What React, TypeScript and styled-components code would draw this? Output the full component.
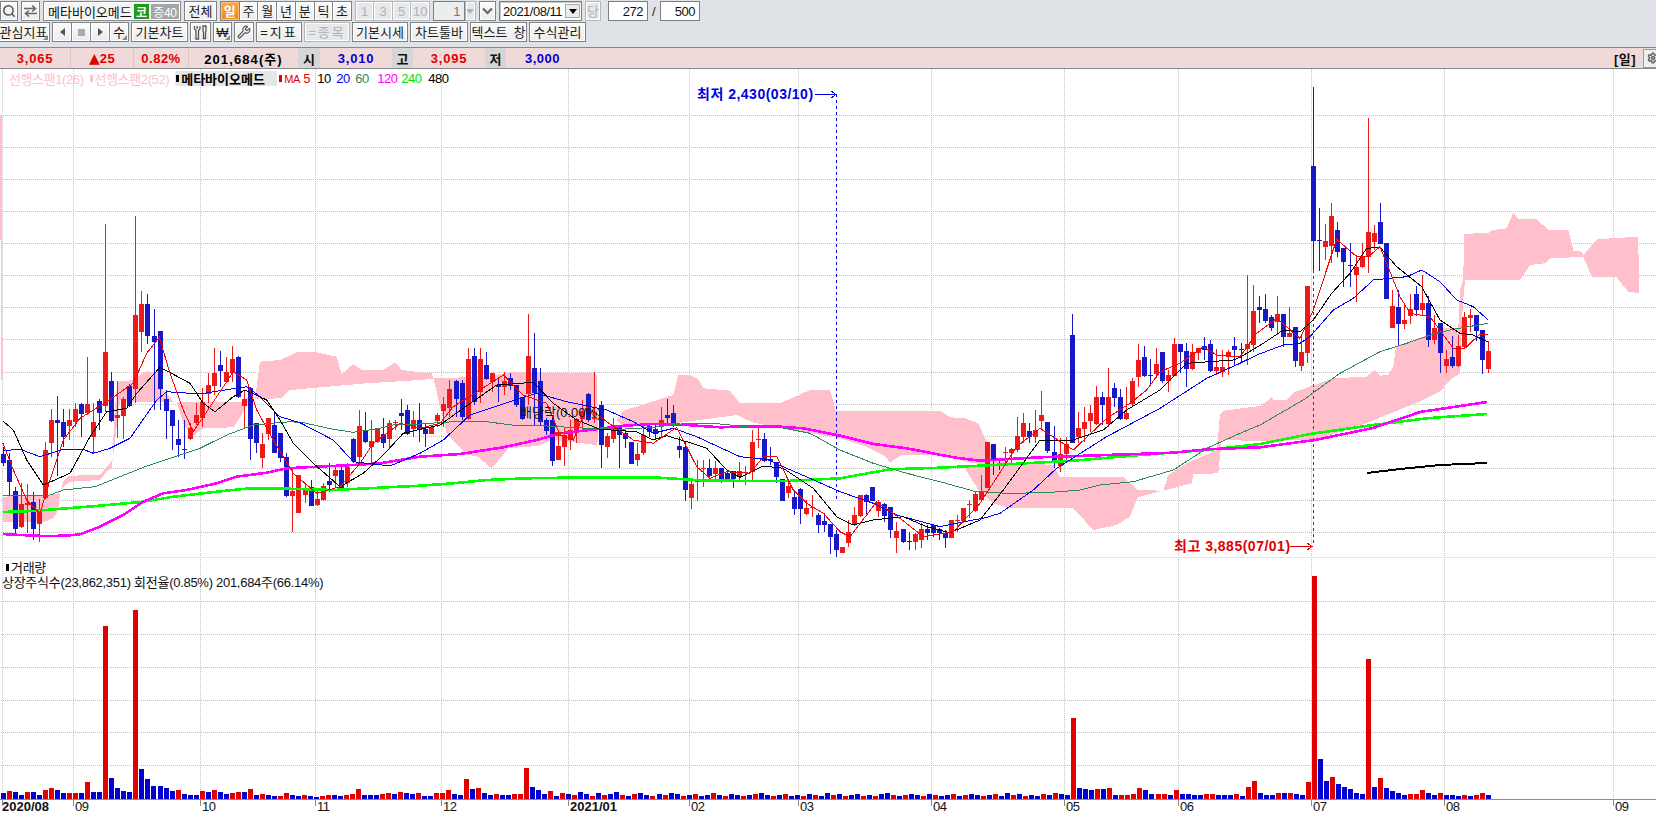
import React from 'react';
import styled, { createGlobalStyle } from 'styled-components';
import { Search, Wrench, Settings } from 'lucide-react';

const FONT = `"Liberation Sans","Noto Sans CJK KR",sans-serif`;
const CHART_TOP = 69;

const GlobalStyle = createGlobalStyle`
  html, body { margin: 0; padding: 0; background: #fff; overflow: hidden; }
  #root { width: 1656px; height: 817px; }
  * { box-sizing: border-box; }
`;

/* ---------- chart data, read off the picture in 3x crop coordinates ---------- */
type Pt = [number, number];
const seg = (ox: number, oy: number, f: number[]): Pt[] => {
  const out: Pt[] = [];
  for (let i = 0; i < f.length; i += 2) out.push([ox + f[i] / 3, oy + f[i + 1] / 3]);
  return out;
};
const abs = (f: number[]): Pt[] => {
  const out: Pt[] = [];
  for (let i = 0; i < f.length; i += 2) out.push([f[i], f[i + 1]]);
  return out;
};
const Z4 = (f: number[]) => seg(0, 340, f);
const Z5 = (f: number[]) => seg(420, 340, f);
const Z6 = (f: number[]) => seg(840, 340, f);
const Z7 = (f: number[]) => seg(1240, 80, f);
const str = (p: Pt[]) => p.map(([x, y]) => `${x.toFixed(1)},${y.toFixed(1)}`).join(' ');

const clouds: Pt[][] = [
  abs([0, 115, 2, 115, 2, 337, 3, 337, 3, 380, 1, 380, 1, 240, 0, 240]),
  Z4([8, 470, 135, 465, 180, 460, 190, 425, 208, 407, 300, 405, 320, 380, 338, 360, 342, 240, 352, 125, 400, 120, 440, 93, 475, 100, 490, 150, 520, 185, 405, 187, 360, 180, 350, 260, 335, 385, 320, 395, 300, 420, 210, 425, 190, 440, 180, 460, 175, 510, 160, 535, 135, 545, 10, 545]),
  Z4([530, 185, 730, 185, 760, 150, 755, 165, 725, 225, 700, 262, 610, 265, 575, 290, 550, 250]),
  Z4([765, 177, 780, 65, 840, 60, 890, 37, 945, 36, 1010, 50, 1025, 103, 1060, 72, 1085, 90, 1150, 90, 1185, 67, 1205, 90, 1260, 97, 1295, 100, 1300, 116, 1260, 120, 1100, 130, 1065, 133, 870, 150, 845, 175]),
  Z5([40, 115, 135, 112, 190, 110, 280, 97, 525, 100, 530, 105, 535, 300, 530, 315, 400, 300, 350, 318, 265, 325, 245, 350, 215, 385, 170, 348, 140, 345, 80, 280]),
  [
    ...Z5([590, 240, 610, 212, 680, 190, 760, 165, 775, 105, 810, 105, 835, 118, 850, 145, 930, 152, 960, 190, 1080, 190, 1170, 150, 1230, 150, 1248, 212]),
    ...Z6([0, 212, 300, 212, 330, 232, 375, 235, 415, 250, 440, 305, 460, 320, 470, 365, 440, 372, 400, 370, 360, 360, 300, 345, 185, 345, 150, 368, 135, 348, 80, 320, 0, 295]),
    ...Z5([1000, 248, 950, 225, 765, 250, 650, 255, 610, 260]),
  ],
  [
    ...Z6([375, 385, 440, 372, 470, 365, 640, 375, 660, 410, 850, 410, 893, 450, 970, 452, 985, 405, 1040, 370, 1075, 355, 1130, 330, 1140, 225, 1150, 212, 1260, 198]),
    ...Z7([85, 960, 95, 950, 100, 960, 140, 960, 165, 935, 190, 927, 280, 895, 380, 890, 405, 870, 420, 887, 445, 885, 460, 860, 468, 800, 550, 770, 600, 745, 655, 745, 660, 630, 670, 600, 672, 462, 745, 458, 760, 450, 800, 445, 820, 397, 835, 418, 890, 417, 925, 450, 985, 450, 1000, 512, 1025, 515, 1030, 525, 1070, 478, 1195, 470, 1197, 640, 1165, 635, 1130, 592, 1055, 590, 1030, 530, 1000, 532, 930, 535, 915, 550, 870, 555, 840, 600, 675, 600, 668, 680, 660, 880, 630, 900, 600, 935, 550, 960]),
    ...abs([1362, 425, 1315, 440, 1260, 441]),
    ...Z6([1145, 300, 1135, 400, 1060, 403, 1055, 430, 970, 452, 945, 458, 893, 472, 870, 530, 830, 555, 760, 570, 700, 505, 510, 505, 460, 490, 415, 450]),
  ],
];

const lines: { c: string; w: number; p: Pt[] }[] = [
  { c: '#000', w: 2, p: abs([1367, 473, 1400, 469, 1440, 465, 1487, 463]) },
  {
    c: '#00ff00', w: 2.6, p: [
      ...Z4([8, 516, 100, 513, 200, 505, 300, 497, 430, 485, 520, 470, 650, 455, 750, 445, 860, 446, 1000, 450, 1100, 445, 1260, 437]),
      ...Z5([100, 430, 200, 420, 320, 415, 500, 412, 700, 412, 860, 422, 1100, 423, 1260, 415]),
      ...Z6([150, 388, 300, 383, 500, 373, 700, 362, 900, 345, 1100, 330, 1260, 312]),
      ...abs([1310, 434, 1373, 425, 1430, 418, 1487, 414]),
    ],
  },
  {
    c: '#ff00ff', w: 2.6, p: [
      ...Z4([8, 582, 60, 585, 130, 588, 200, 587, 240, 583, 300, 560, 370, 525, 430, 485, 490, 460, 560, 450, 650, 430, 710, 410, 800, 398, 860, 385, 950, 380, 1060, 375, 1140, 370, 1260, 350]),
      ...Z5([120, 342, 250, 322, 350, 300, 420, 280, 530, 268, 600, 258, 700, 252, 800, 255, 900, 262, 1050, 258, 1150, 265, 1260, 287]),
      ...Z6([100, 312, 200, 325, 340, 352, 420, 362, 600, 352, 800, 345, 1000, 338, 1100, 328, 1260, 322]),
      ...abs([1315, 440, 1373, 428, 1420, 412, 1487, 402]),
    ],
  },
  {
    c: '#2e8b57', w: 1, p: [
      ...Z4([10, 467, 150, 465, 190, 450, 285, 440, 360, 410, 440, 378, 530, 348, 600, 325, 680, 285, 760, 255, 870, 245, 910, 248, 1000, 268, 1060, 277, 1140, 265, 1190, 252, 1260, 252]),
      ...Z5([100, 245, 200, 245, 290, 257, 380, 258, 500, 265, 600, 268, 700, 262, 800, 250, 880, 250, 1000, 262, 1080, 262, 1170, 280, 1260, 330]),
      ...Z6([100, 370, 200, 400, 300, 425, 400, 453, 500, 460, 620, 458, 720, 450, 780, 435, 880, 425, 1000, 390, 1100, 325, 1200, 280, 1260, 255]),
      ...Z7([190, 960, 300, 880, 420, 815, 500, 790, 580, 762, 640, 748, 745, 730]),
    ],
  },
  {
    c: '#0000ff', w: 1, p: [
      ...Z4([8, 332, 60, 328, 120, 350, 190, 328, 250, 328, 280, 340, 330, 325, 390, 295, 470, 180, 500, 155, 600, 162, 660, 152, 740, 140, 780, 170, 840, 230, 900, 248, 1000, 300, 1060, 365, 1170, 378, 1260, 340]),
      ...Z5([70, 300, 150, 225, 300, 175, 350, 160, 440, 185, 560, 210, 640, 245, 700, 280, 760, 265, 830, 290, 960, 350, 1040, 358, 1100, 385, 1170, 415, 1260, 455]),
      ...Z6([100, 490, 170, 525, 300, 560, 400, 540, 430, 535, 480, 520, 580, 450, 650, 385, 800, 290, 960, 205, 1100, 115]),
      ...Z7([0, 850, 50, 825, 130, 795, 180, 790, 210, 770, 280, 690, 340, 655, 400, 600, 500, 590, 545, 570, 600, 605, 650, 660, 700, 680, 745, 720]),
    ],
  },
  {
    c: '#000', w: 1, p: [
      ...Z4([8, 242, 40, 270, 80, 360, 130, 435, 210, 400, 270, 290, 320, 215, 380, 205, 410, 160, 480, 82, 520, 103, 570, 130, 610, 190, 645, 215, 700, 170, 735, 150, 800, 180, 840, 240, 880, 310, 940, 370, 1020, 440, 1090, 400, 1150, 345, 1210, 280, 1260, 268]),
      ...Z5([60, 255, 130, 205, 230, 135, 340, 127, 400, 190, 470, 240, 540, 268, 650, 275, 700, 300, 740, 287, 800, 305, 860, 325, 920, 390, 960, 412, 1030, 378, 1090, 385, 1180, 445, 1250, 530]),
      ...Z6([40, 555, 100, 540, 190, 530, 260, 560, 330, 578, 420, 540, 490, 450, 600, 300, 700, 300, 790, 270, 860, 210, 960, 150, 1040, 70, 1180, 60]),
      ...Z7([0, 832, 70, 790, 130, 750, 180, 755, 220, 720, 275, 640, 330, 580, 380, 505, 420, 502, 470, 560, 545, 620, 600, 720, 660, 760, 700, 765, 745, 787]),
    ],
  },
  {
    c: '#ff0000', w: 1, p: [
      ...Z4([8, 308, 40, 390, 80, 480, 120, 520, 150, 420, 190, 300, 240, 235, 320, 185, 400, 130, 440, 40, 478, -8, 510, 100, 550, 210, 580, 275, 650, 170, 700, 95, 740, 120, 770, 210, 820, 300, 880, 400, 950, 460, 1020, 440, 1080, 370, 1120, 310, 1200, 250, 1260, 265]),
      ...Z5([60, 250, 100, 200, 180, 150, 250, 105, 310, 165, 380, 190, 420, 285, 460, 300, 500, 200, 560, 245, 640, 300, 700, 310, 770, 262, 830, 380, 870, 415, 920, 395, 990, 400, 1030, 350, 1070, 350, 1120, 450, 1160, 490, 1210, 520, 1260, 575]),
      ...Z6([30, 590, 110, 485, 180, 535, 250, 590, 340, 575, 420, 490, 530, 320, 600, 265, 700, 330, 800, 235, 870, 190, 920, 150, 960, 95, 1020, 70, 1090, 20, 1130, 45, 1180, 50]),
      ...Z7([0, 830, 50, 760, 110, 715, 180, 775, 220, 690, 290, 478, 350, 530, 385, 530, 420, 500, 480, 650, 510, 700, 570, 710, 640, 805, 675, 805, 720, 762, 745, 765]),
    ],
  },
];

/* x, colour (1 red, 0 blue), high, body top, body bottom, low */
type C = [number, number, number, number, number, number];
const c4: C[] = [
  [10,0,322,342,370,378],[28,0,340,360,427,465],[46,0,440,453,568,580],[64,1,430,492,560,565],[82,1,432,490,494,578],[100,0,455,486,567,600],[118,1,478,515,552,606],[136,1,305,330,473,478],[154,1,207,240,308,350],[172,0,168,240,248,408],
  [190,0,207,246,290,320],[208,1,207,240,258,300],[226,1,190,207,245,260],[244,0,190,192,222,290],[262,1,50,192,218,225],[280,1,190,246,290,340],[298,0,178,183,218,270],[316,1,-348,36,198,215],[334,0,95,123,242,245],[352,1,122,225,233,295],
  [370,1,170,176,228,297],[388,0,133,137,198,200],[406,1,-372,-75,147,190],[424,1,-147,-108,-24,36],[442,0,-138,-108,-12,12],[463,0,-93,-12,6,210],[481,0,-27,-27,147,210],[499,0,150,178,212,298],[517,0,210,210,258,330],[535,0,240,297,315,352],
  [553,0,240,327,330,358],[571,1,250,265,298,300],[589,1,190,225,250,255],[607,1,145,185,235,262],[625,1,100,135,162,190],[643,1,24,98,138,165],[661,0,33,75,93,140],[679,1,51,97,127,130],[697,1,18,57,98,125],[715,0,48,50,172,175],
  [733,1,150,177,198,265],[751,0,140,145,298,360],[769,0,250,250,308,340],[787,1,278,312,353,385],[805,1,235,235,282,300],[823,0,215,255,338,340],[841,0,280,280,355,365],[859,0,340,352,468,470],[877,1,385,453,468,575],[895,1,405,405,518,520],
  [916,1,430,450,465,490],[934,0,420,442,497,498],[952,1,450,478,495,497],[970,1,430,438,480,482],[988,0,370,424,434,455],[1006,1,378,390,408,445],[1024,0,375,390,443,445],[1042,1,370,380,428,440],[1060,0,293,297,362,370],[1078,1,210,258,352,370],
  [1096,0,215,270,306,310],[1114,1,240,304,320,368],[1132,1,265,268,307,310],[1150,0,235,282,310,325],[1168,1,240,250,298,328],[1186,1,240,245,248,270],[1204,0,178,219,228,270],[1222,0,195,210,282,285],[1240,1,212,240,268,290],[1258,0,190,240,270,305],
];
const c5: C[] = [
  [16,0,250,268,282,320],[34,1,255,260,281,283],[52,1,220,225,243,260],[70,1,170,192,213,262],[88,1,120,147,204,230],[109,0,120,123,178,232],[127,0,120,128,232,240],[145,1,25,57,237,240],[163,0,25,48,186,195],[181,1,25,57,156,190],
  [199,0,37,75,118,120],[217,1,99,99,126,155],[235,0,115,135,141,185],[253,1,97,124,140,165],[271,0,99,114,138,150],[289,0,135,135,194,200],[307,0,172,172,237,240],[325,1,-78,48,163,195],[343,0,-21,84,160,255],[361,0,85,123,245,258],
  [379,0,235,240,272,285],[397,0,235,240,362,378],[415,1,275,318,360,360],[433,1,265,284,321,378],[451,1,240,270,300,330],[469,1,235,238,273,310],[487,1,180,212,236,270],[505,0,160,163,240,245],[523,1,97,232,236,250],[544,0,183,195,315,385],
  [562,1,280,288,320,355],[580,1,235,262,297,310],[598,0,260,262,285,385],[616,0,270,280,296,325],[634,0,305,305,372,372],[652,1,308,342,360,378],[670,1,250,285,340,345],[688,0,250,257,277,290],[706,0,250,266,282,300],[724,1,200,240,262,295],
  [742,0,177,225,233,255],[760,0,195,218,250,260],[778,0,290,318,330,355],[796,0,305,320,450,483],[814,1,415,432,473,507],[832,1,360,424,427,483],[850,1,360,384,387,440],[868,0,358,384,408,420],[886,1,362,384,402,420],[904,0,384,384,420,430],
  [922,0,390,400,416,420],[940,0,393,393,417,443],[958,1,365,393,408,420],[976,1,378,396,398,435],[997,1,270,305,396,420],[1015,1,262,297,299,325],[1033,0,280,297,362,365],[1051,0,322,357,362,375],[1069,0,365,365,410,430],[1087,0,418,418,482,484],
  [1105,1,420,438,460,473],[1123,0,455,470,507,525],[1141,0,445,447,507,552],[1159,1,480,504,521,525],[1177,1,465,502,505,530],[1195,0,520,525,554,578],[1213,0,520,543,554,575],[1231,0,552,552,590,642],[1249,0,570,583,630,650],
];
const c6: C[] = [
  [7,1,620,620,638,640],[25,1,540,576,608,620],[43,1,500,525,555,558],[61,1,465,465,527,530],[79,0,462,465,486,525],[97,0,440,441,482,483],[115,1,480,486,512,530],[133,0,488,492,528,545],[151,0,500,501,570,595],[169,1,545,573,594,640],
  [190,0,566,566,606,608],[208,0,575,603,605,630],[226,1,580,582,605,630],[244,1,548,567,600,625],[262,0,555,567,580,600],[280,0,555,555,579,590],[298,0,565,567,580,600],[316,0,570,580,594,625],[334,1,540,540,594,595],[352,1,525,540,542,575],
  [370,1,504,504,544,550],[388,1,480,492,495,535],[406,1,455,462,513,515],[424,1,405,456,480,485],[442,1,305,306,444,445],[460,0,312,312,360,405],[478,0,355,358,360,390],[496,1,320,335,338,370],[514,1,325,327,340,368],[532,1,230,289,330,335],
  [550,1,220,250,290,310],[568,0,250,272,290,310],[586,1,210,270,290,310],[604,1,153,225,243,270],[622,0,246,246,332,340],[643,0,258,336,362,385],[661,1,295,342,378,396],[679,1,290,312,343,370],[697,0,-78,-15,308,310],[715,1,215,265,290,310],
  [733,1,200,247,267,305],[751,1,195,220,243,275],[769,1,138,171,252,255],[787,0,155,171,195,255],[805,1,85,171,252,262],[823,0,130,144,174,200],[841,0,147,171,238,240],[859,1,140,219,238,240],[877,1,114,124,193,200],[895,1,12,60,110,140],
  [913,0,18,51,108,110],[931,0,57,105,107,137],[949,1,24,72,103,115],[967,0,36,36,123,130],[985,1,90,105,122,155],[1003,1,-6,12,108,108],[1021,0,12,12,36,100],[1039,0,9,33,87,140],[1057,1,12,36,87,90],[1075,1,24,24,40,60],
  [1093,0,-10,18,30,60],[1111,0,0,12,93,97],[1129,1,27,81,93,105],[1147,1,30,81,97,110],[1165,1,30,36,51,105],[1183,0,-10,18,30,78],
];
const c7: C[] = [
  [4,0,790,806,808,850],[22,1,585,792,808,855],[40,1,615,693,795,815],[58,0,648,681,690,730],[76,0,642,687,722,730],[94,0,705,711,743,752],[112,1,648,702,727,765],[130,0,702,702,770,800],[148,1,682,759,770,772],[166,0,741,741,842,862],
  [184,1,765,816,857,872],[202,1,618,618,818,848],[220,0,21,258,482,570],[238,0,384,481,483,572],[256,1,432,483,500,540],[274,1,370,408,497,548],[292,0,426,450,516,530],[310,0,504,504,546,620],[331,0,490,554,556,620],[349,1,525,561,584,665],
  [367,1,490,528,561,564],[385,1,114,456,531,578],[403,1,435,459,486,510],[421,0,369,426,492,492],[439,0,489,489,657,657],[457,1,630,678,744,744],[475,0,630,681,732,795],[493,1,672,720,732,747],[511,1,642,687,708,732],[529,0,618,642,690,708],
  [547,1,585,669,690,705],[565,0,648,669,780,801],[583,1,705,744,780,792],[601,0,729,729,819,879],[619,1,810,837,858,879],[637,0,768,831,858,864],[655,1,765,798,858,860],[673,1,697,711,802,805],[691,1,687,705,714,756],[709,0,705,705,753,783],
  [727,0,750,750,840,882],[745,1,783,813,866,879],
];
const candles = [
  ...c4.map((c) => ({ c, ox: 0, oy: 340 })),
  ...c5.map((c) => ({ c, ox: 420, oy: 340 })),
  ...c6.map((c) => ({ c, ox: 840, oy: 340 })),
  ...c7.map((c) => ({ c, ox: 1240, oy: 80 })),
];

/* volume: colour, top in crop coordinates (baseline 717) */
const volLeft = 'b699 r693 b696 b705 r696 b696 b705 r690 r684 b690 b699 r699 r699 b699 r666 b696 b696 r198 b654 b684 b693 b696 r150 b627 b657 b678 b678 b684 b693 r690 b702 b705 b705 r693 b696 r690 b696 b702 r699 r696 b696 r687 b705 r702 b705 b708 r708 r699 b705 b708 r705 b708 b711 r708 r705 b705 b708 r705 r702 r687 b705 b705 b705 r702 r699 b702 r696 b699 b702 r699 b708 b708 r699 r699 r690 b702 b705 r657 b687 r684 b699 b705 r702 b705 b705 r702 r702 r624 b681 b690 b702 r693 b708';
const volMidHeights = [6, 5, 4, 7, 5, 3, 6, 4, 5, 7, 4, 3, 5, 6, 4, 3, 5, 4, 6, 5, 3, 4, 5, 3, 4, 6, 4, 3, 5, 4, 3, 4, 5, 6, 4, 3, 4, 5, 3, 4, 3, 5, 4, 3, 6, 4, 5, 3, 4, 5, 3, 4, 3, 5, 6, 4, 3, 4, 5, 4, 3, 5, 4, 3, 4, 5, 3, 4, 5, 4, 3, 4, 5, 3, 6, 4, 5, 3, 4, 3, 5, 4, 6, 5, 4, 81, 11, 10, 9];
const volRight = 'r687 b687 r684 b705 r705 r705 r702 r684 b690 b702 r702 r702 b705 r690 b702 b702 b705 b705 r702 r702 b705 b705 b705 r702 b708 r681 r663 b699 b705 b705 r699 b699 r699 b702 b705 r666 r48 b597 b663 r651 b672 b681 b687 b699 b702 r297 b681 r654 b684 b693 b699 b705 r702 r702 r690 b699 b705 r699 b705 b705 b708 r705 b708 r705 r699 b705';
const parseVol = (s: string) => s.split(' ').map((t) => ({ red: t[0] === 'r', h: (717 - Number(t.slice(1))) / 3 }));
const volumes = [
  ...parseVol(volLeft),
  ...volMidHeights.map((h, i) => ({ red: i === 85 || (i < 85 && (i * 13) % 5 < 2), h })),
  ...parseVol(volRight),
];

const HGRID = [115, 147, 179, 211, 243, 275, 307, 339, 372, 404, 436, 468, 500, 532, 601, 634, 667, 700, 732, 765];
const VGRID = [2, 73, 200, 315, 441, 568, 689, 798, 931, 1064, 1178, 1311, 1444, 1613];
const AXIS: { x: number; t: string; strong?: boolean }[] = [
  { x: 2, t: '2020/08', strong: true }, { x: 75, t: '09' }, { x: 202, t: '10' }, { x: 317, t: '11' }, { x: 443, t: '12' },
  { x: 570, t: '2021/01', strong: true }, { x: 691, t: '02' }, { x: 800, t: '03' }, { x: 933, t: '04' }, { x: 1066, t: '05' },
  { x: 1180, t: '06' }, { x: 1313, t: '07' }, { x: 1446, t: '08' }, { x: 1615, t: '09' },
];

/* ---------- toolbar ---------- */
const Page = styled.div`
  width: 1656px;
  height: 817px;
  display: flex;
  flex-direction: column;
  overflow: hidden;
  font-family: ${FONT};
  background: #fff;
`;
const Toolbar = styled.div`
  height: 47px;
  padding-top: 1px;
  background: #dfe2e6;
  display: flex;
  flex-direction: column;
  gap: 1px;
`;
const ToolRow = styled.div<{ $gap: number; $left?: number }>`
  height: 20px;
  display: flex;
  gap: ${(p) => p.$gap}px;
  margin-left: ${(p) => p.$left ?? 0}px;
`;
const Btn = styled.div<{ $w: number; $on?: boolean; $off?: boolean; $corner?: boolean; $ml?: number; $ls?: number }>`
  position: relative;
  flex: none;
  width: ${(p) => p.$w}px;
  height: 20px;
  margin-left: ${(p) => p.$ml ?? 0}px;
  display: flex;
  align-items: center;
  justify-content: center;
  font-size: 13px;
  line-height: 1;
  white-space: nowrap;
  word-spacing: 2.5px;
  letter-spacing: ${(p) => p.$ls ?? 0}px;
  color: ${(p) => (p.$on ? '#fff' : p.$off ? '#b0b2b4' : '#1c1c1c')};
  font-weight: ${(p) => (p.$on ? 700 : 400)};
  background: ${(p) => (p.$on ? 'linear-gradient(#ffa544,#f08a1c)' : p.$off ? '#e6e8ea' : 'linear-gradient(#fbfbfb,#ececec)')};
  border: 1px solid ${(p) => (p.$off ? '#b4b7ba' : '#7f8386')};
  box-shadow: inset 0 0 0 1px ${(p) => (p.$on ? '#ffc27e' : '#fff')};
  &::after {
    content: '';
    display: ${(p) => (p.$corner ? 'block' : 'none')};
    position: absolute;
    right: 1px;
    bottom: 1px;
    border-style: solid;
    border-width: 0 0 5px 5px;
    border-color: transparent transparent #8a8a8a transparent;
  }
`;
const BtnGroup = styled.div`
  display: flex;
  flex: none;
  & > * + * {
    margin-left: -1px;
  }
`;
const NameField = styled.div`
  flex: none;
  width: 138px;
  height: 20px;
  display: flex;
  align-items: center;
  padding-left: 4px;
  font-size: 13px;
  color: #111;
  background: #f4f4f4;
  border: 1px solid #85898c;
  box-shadow: inset 0 0 0 1px #fff;
`;
const NameText = styled.span`
  width: 86px;
  white-space: nowrap;
`;
const Market = styled.span`
  width: 15px;
  height: 15px;
  display: flex;
  align-items: center;
  justify-content: center;
  background: #1f9a1f;
  color: #fff;
  font-size: 12px;
  font-weight: 700;
`;
const Grade = styled.span`
  width: 28px;
  height: 15px;
  margin-left: 2px;
  display: flex;
  align-items: center;
  justify-content: center;
  background: #a4a6a8;
  color: #fff;
  font-size: 12px;
  letter-spacing: -0.3px;
`;
const Field = styled.div<{ $w: number; $off?: boolean; $sunken?: boolean; $ml?: number }>`
  flex: none;
  width: ${(p) => p.$w}px;
  height: 20px;
  margin-left: ${(p) => p.$ml ?? 0}px;
  display: flex;
  align-items: center;
  justify-content: ${(p) => (p.$sunken ? 'flex-start' : 'flex-end')};
  padding: ${(p) => (p.$sunken ? '0 0 0 3px' : '0 4px 0 0')};
  font-size: 13px;
  letter-spacing: -0.5px;
  color: ${(p) => (p.$off ? '#777' : '#111')};
  background: ${(p) => (p.$off ? '#eceded' : '#fff')};
  border: 1px solid #7c8084;
  box-shadow: ${(p) => (p.$sunken ? 'inset 1px 1px 0 #c8c8c8' : 'none')};
`;
const DropArrow = styled.span<{ $color: string }>`
  width: 0;
  height: 0;
  margin: 0 auto;
  border-left: 4px solid transparent;
  border-right: 4px solid transparent;
  border-top: 5px solid ${(p) => p.$color};
`;
const DateDrop = styled.span`
  margin-left: 3px;
  width: 15px;
  height: 14px;
  display: flex;
  align-items: center;
  background: #ececec;
  border: 1px solid #aaa;
`;
const Slash = styled.span`
  width: 6px;
  font-size: 13px;
  color: #222;
  align-self: center;
  text-align: center;
`;
const NavLeft = styled.span`
  width: 0;
  height: 0;
  border-top: 4px solid transparent;
  border-bottom: 4px solid transparent;
  border-right: 5px solid #555;
`;
const NavRight = styled.span`
  width: 0;
  height: 0;
  border-top: 4px solid transparent;
  border-bottom: 4px solid transparent;
  border-left: 5px solid #555;
`;
const NavStop = styled.span`
  width: 7px;
  height: 7px;
  background: #aaa;
`;

/* ---------- quote bar ---------- */
const QuoteBar = styled.div`
  height: 22px;
  display: grid;
  grid-template-columns: 71px 63px 55px 109px 22px 72px 21px 72px 21px 1fr;
  align-items: stretch;
  background: #f0d9d9;
  border-top: 1px solid #85888b;
  border-bottom: 1px solid #85888b;
  font-weight: 700;
`;
const Quote = styled.div<{ $color: string; $rule?: boolean; $ls?: number }>`
  display: flex;
  align-items: center;
  justify-content: center;
  font-size: 13px;
  letter-spacing: ${(p) => p.$ls ?? 0.5}px;
  white-space: nowrap;
  color: ${(p) => p.$color};
  border-right: ${(p) => (p.$rule ? '1px solid #dcc6c6' : '0')};
`;
const UpMark = styled.span`
  font-family: "DejaVu Sans", sans-serif;
  font-size: 14px;
  letter-spacing: 0;
`;
const QuoteLabel = styled.div`
  display: flex;
  align-items: center;
  justify-content: center;
  background: #d6d6d6;
  color: #111;
  font-size: 13px;
`;
const QuoteLast = styled.div`
  display: flex;
  align-items: center;
  padding-left: 19px;
  font-size: 13px;
  letter-spacing: 0.5px;
  color: #0000d0;
`;
const QuoteEnd = styled.div`
  margin-left: auto;
  display: flex;
  align-items: center;
  gap: 7px;
  color: #111;
  font-size: 13px;
`;
const Period = styled.span`
  letter-spacing: 0.5px;
`;
const GearBtn = styled.span`
  width: 18px;
  margin-right: -5px;
  height: 19px;
  display: flex;
  align-items: center;
  padding-left: 3px;
  background: #eee;
  border: 1px solid #9a9a9a;
  color: #666;
`;

/* ---------- chart ---------- */
const ChartArea = styled.div`
  position: relative;
  flex: 1;
  overflow: hidden;
`;
const ChartSvg = styled.svg`
  display: block;
  shape-rendering: crispEdges;
`;
const Legend = styled.div`
  position: absolute;
  left: 9px;
  top: 1px;
  height: 17px;
  display: flex;
  align-items: center;
  font-size: 13px;
  white-space: nowrap;
`;
const LegendText = styled.span<{ $color: string; $w?: number; $size?: number }>`
  color: ${(p) => p.$color};
  display: inline-block;
  width: ${(p) => (p.$w ? `${p.$w}px` : 'auto')};
  font-size: ${(p) => p.$size ?? 13}px;
  letter-spacing: -0.4px;
`;
const Marker = styled.span<{ $color: string; $gap?: number }>`
  width: 3px;
  height: 7px;
  margin: 0 2px 0 ${(p) => p.$gap ?? 0}px;
  background: ${(p) => p.$color};
`;
const LegendName = styled.span`
  width: 102px;
  height: 15px;
  margin: 0 2px 0 6px;
  padding-left: 1px;
  display: flex;
  align-items: center;
  background: #e6e6e6;
  color: #000;
  font-weight: 700;
`;
const VolumeLegend = styled.div`
  position: absolute;
  left: 2px;
  top: 491px;
  font-size: 13px;
  line-height: 15px;
  letter-spacing: -0.28px;
  color: #111;
  white-space: nowrap;
`;
const VolumeTitle = styled.div`
  display: flex;
  align-items: center;
  padding-left: 4px;
`;
const Note = styled.div<{ $x: number; $y: number; $color: string; $bold?: boolean }>`
  position: absolute;
  left: ${(p) => p.$x}px;
  top: ${(p) => p.$y - CHART_TOP}px;
  font-size: ${(p) => (p.$bold ? 14 : 13)}px;
  letter-spacing: ${(p) => (p.$bold ? 0.5 : 0)}px;
  line-height: 14px;
  font-weight: ${(p) => (p.$bold ? 700 : 400)};
  color: ${(p) => p.$color};
  white-space: nowrap;
`;
const AxisLabel = styled.div<{ $strong?: boolean }>`
  position: absolute;
  top: 730px;
  font-size: 13px;
  line-height: 15px;
  letter-spacing: ${(p) => (p.$strong ? 0 : -0.4)}px;
  font-weight: ${(p) => (p.$strong ? 700 : 400)};
  color: #111;
`;

const SwapIcon = () => (
  <svg width="15" height="14" viewBox="0 0 15 14" fill="none" stroke="#666" strokeWidth="1.6">
    <path d="M1 4.5h11M9 1.5l3.5 3-3.5 3" />
    <path d="M14 9.5H3M6 6.5l-3.5 3 3.5 3" />
  </svg>
);
const ToolsIcon = () => (
  <svg width="15" height="15" viewBox="0 0 15 15" fill="none" stroke="#555" strokeWidth="1.3">
    <path d="M1.5 1v3l1.500 1.500V14h2.500V5.500L7 4V1" />
    <path d="M4.200 1v3" />
    <path d="M10 1h3v5l-.5 1v6.500h-2V7l-.5-1z" />
  </svg>
);
const ChevronIcon = () => (
  <svg width="11" height="8" viewBox="0 0 11 8" fill="none" stroke="#666" strokeWidth="2.2">
    <path d="M1 1.5l4.500 4.500L10 1.500" />
  </svg>
);

const App = () => {
  return (
    <Page>
      <GlobalStyle />
      <Toolbar>
        <ToolRow $gap={3}>
          <Btn $w={18}><Search size={14} color="#555" strokeWidth={2.6} /></Btn>
          <Btn $w={19}><SwapIcon /></Btn>
          <NameField>
            <NameText>메타바이오메드</NameText>
            <Market>코</Market>
            <Grade>증40</Grade>
          </NameField>
          <Btn $w={33}>전체</Btn>
          <BtnGroup>
            <Btn $w={19.71} $on>일</Btn>
            {['주', '월', '년', '분', '틱', '초'].map((t) => <Btn key={t} $w={19.71}>{t}</Btn>)}
          </BtnGroup>
          <BtnGroup>
            {['1', '3', '5', '10'].map((t) => <Btn key={t} $w={19.5} $off>{t}</Btn>)}
          </BtnGroup>
          <Field $w={32} $off>1</Field>
          <Btn $w={11} $ml={-3} $off><DropArrow $color="#b0b2b4" /></Btn>
          <Btn $w={17}><ChevronIcon /></Btn>
          <Field $w={83} $sunken>
            2021/08/11
            <DateDrop><DropArrow $color="#000" /></DateDrop>
          </Field>
          <Btn $w={16} $off>당</Btn>
          <Field $w={40} $ml={4}>272</Field>
          <Slash>/</Slash>
          <Field $w={40}>500</Field>
        </ToolRow>
        <ToolRow $gap={2} $left={-3}>
          <Btn $w={53} $corner>관심지표</Btn>
          <BtnGroup>
            <Btn $w={20}><NavLeft /></Btn>
            <Btn $w={20}><NavStop /></Btn>
            <Btn $w={20}><NavRight /></Btn>
            <Btn $w={20} $corner>수</Btn>
          </BtnGroup>
          <Btn $w={57}>기본차트</Btn>
          <Btn $w={21}><ToolsIcon /></Btn>
          <Btn $w={19} $corner>₩</Btn>
          <Btn $w={20}><Wrench size={14} color="#555" /></Btn>
          <Btn $w={46} $ls={2}>=지표</Btn>
          <Btn $w={46} $ls={2} $off>=종목</Btn>
          <Btn $w={56}>기본시세</Btn>
          <Btn $w={58}>차트툴바</Btn>
          <Btn $w={57}>텍스트 창</Btn>
          <Btn $w={57}>수식관리</Btn>
        </ToolRow>
      </Toolbar>

      <QuoteBar>
        <Quote $color="#e00000" $ls={0.8} $rule>3,065</Quote>
        <Quote $color="#e00000" $rule><UpMark>▲</UpMark>25</Quote>
        <Quote $color="#e00000" $rule>0.82%</Quote>
        <Quote $color="#000" $ls={1.1}>201,684(주)</Quote>
        <QuoteLabel>시</QuoteLabel>
        <Quote $color="#0000d0" $ls={0.8}>3,010</Quote>
        <QuoteLabel>고</QuoteLabel>
        <Quote $color="#e00000" $ls={0.8}>3,095</Quote>
        <QuoteLabel>저</QuoteLabel>
        <QuoteLast>
          3,000
          <QuoteEnd>
            <Period>[일]</Period>
            <GearBtn><Settings size={12} strokeWidth={3} /></GearBtn>
          </QuoteEnd>
        </QuoteLast>
      </QuoteBar>

      <ChartArea>
        <ChartSvg width={1656} height={748} viewBox={`0 ${CHART_TOP} 1656 748`}>
          {HGRID.map((y) => <line key={y} x1={1} x2={1656} y1={y + 0.5} y2={y + 0.5} stroke="#c4c4c4" strokeDasharray="1 1" />)}
          {VGRID.map((x) => <line key={x} x1={x + 0.5} x2={x + 0.5} y1={69} y2={799} stroke="#c4c4c4" strokeDasharray="1 1" />)}
          <line x1={0} x2={1656} y1={557.5} y2={557.5} stroke="#e6e6e6" />
          {clouds.map((p, i) => <polygon key={i} points={str(p)} fill="#ffc0cb" />)}

          <line x1={836.5} x2={836.5} y1={94} y2={500} stroke="#0000e0" strokeDasharray="3 3" />
          <line x1={1313.5} x2={1313.5} y1={270} y2={546} stroke="#e00000" strokeDasharray="3 3" />

          {candles.map(({ c, ox, oy }, i) => {
            const cx = Math.round(ox + c[0] / 3 - 0.5);
            const col = c[1] ? '#ee1a1a' : '#1818c8';
            const Y = (v: number) => Math.round(oy + v / 3);
            const top = Y(c[3]);
            return (
              <g key={i} fill={col}>
                <rect x={cx} y={Y(c[2])} width={1} height={Math.max(1, Y(c[5]) - Y(c[2]))} />
                <rect x={cx - 2} y={top} width={5} height={Math.max(1, Y(c[4]) - top)} />
              </g>
            );
          })}
          {lines.map((l, i) => <polyline key={i} points={str(l.p)} fill="none" stroke={l.c} strokeWidth={l.w} />)}

          <path d="M554 432h9l-4.500 5z" fill="#ee1a1a" />
          <path d="M815 94.500h21M831 91l5 3.500-5 3.500" fill="none" stroke="#0000e0" />
          <path d="M1290 546.500h22M1307 543l5 3.500-5 3.500" fill="none" stroke="#e00000" />

          {volumes.map((v, i) => (
            <rect key={i} x={Math.round(1.2 + i * 6.012)} y={799 - Math.round(v.h)} width={5} height={Math.round(v.h)} fill={v.red ? '#e00000' : '#0000d0'} />
          ))}

          <rect x={0} y={799} width={1656} height={1} fill="#8c8c8c" />
          {VGRID.map((x) => <rect key={x} x={x} y={800} width={1} height={6} fill="#8c8c8c" />)}
        </ChartSvg>

        <Legend>
          <LegendText $color="#ffc0cb">선행스팬1(26)</LegendText>
          <Marker $color="#ffc0cb" $gap={6} />
          <LegendText $color="#ffc0cb">선행스팬2(52)</LegendText>
          <LegendName><Marker $color="#000" />메타바이오메드</LegendName>
          <Marker $color="#e00000" />
          <LegendText $color="#e00000" $w={19} $size={11}>MA</LegendText>
          <LegendText $color="#e00000" $w={14}>5</LegendText>
          <LegendText $color="#000" $w={19}>10</LegendText>
          <LegendText $color="#0000ff" $w={19}>20</LegendText>
          <LegendText $color="#2e8b57" $w={22}>60</LegendText>
          <LegendText $color="#ff00ff" $w={24}>120</LegendText>
          <LegendText $color="#00e000" $w={27}>240</LegendText>
          <LegendText $color="#000">480</LegendText>
        </Legend>

        <Note $x={697} $y={87} $color="#0000e0" $bold>최저 2,430(03/10)</Note>
        <Note $x={1174} $y={539} $color="#e00000" $bold>최고 3,885(07/01)</Note>
        <Note $x={520} $y={406} $color="#111">배당락(0.00%)</Note>

        <VolumeLegend>
          <VolumeTitle><Marker $color="#000" />거래량</VolumeTitle>
          <div>상장주식수(23,862,351) 회전율(0.85%) 201,684주(66.14%)</div>
        </VolumeLegend>

        {AXIS.map((a) => (
          <AxisLabel key={a.x} $strong={a.strong} style={{ left: a.x }}>{a.t}</AxisLabel>
        ))}
      </ChartArea>
    </Page>
  );
};

export default App;
